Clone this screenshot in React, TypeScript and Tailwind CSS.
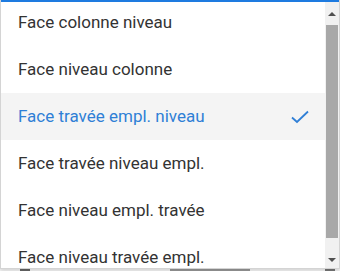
const options = [
  "Face colonne niveau",
  "Face niveau colonne",
  "Face travée empl. niveau",
  "Face travée niveau empl.",
  "Face niveau empl. travée",
  "Face niveau travée empl.",
];

const selected = 2;

export default function App() {
  return (
    <div className="relative w-[340px] h-[271px] overflow-hidden bg-[#f7f7f7] font-['Roboto',sans-serif]">
      {/* bits of the page behind the menu */}
      <div className="absolute left-0 top-[266px] w-full h-[5px] flex items-end">
        <div className="ml-[20px] w-[10px] h-[2px] bg-[#666]" />
        <div className="ml-[140px] w-[80px] h-[2px] bg-[#999]" />
        <div className="ml-[75px] w-[10px] h-[2px] bg-[#777]" />
      </div>

      <div className="relative flex w-[340px] h-[269px] bg-white border-l border-r border-b border-[#d4d4d4] shadow-[0_2px_4px_rgba(0,0,0,0.15)] overflow-hidden">
        <div className="absolute left-0 top-0 w-full h-[2px] bg-[#1e7be0] z-10" />
        <ul className="flex-1 flex flex-col -mt-[1px]">
          {options.map((opt, i) => (
            <li
              key={i}
              className={`flex items-center justify-between h-[47px] shrink-0 pl-[17px] pr-[16px] text-[17px] ${
                i === selected ? "bg-[#f4f4f4] text-[#2f7fd6]" : "text-[#333]"
              }`}
            >
              <span>{opt}</span>
              {i === selected && (
                <svg width="18" height="14" viewBox="0 0 18 14" fill="none" stroke="#2f7fd6" strokeWidth="1.8">
                  <path d="M1 7.5 L6 12 L17 1.5" />
                </svg>
              )}
            </li>
          ))}
        </ul>

        {/* scrollbar */}
        <div className="flex flex-col w-[14px] bg-[#f1f1f1] shrink-0">
          <div className="h-[25px] flex items-center justify-center pt-[2px]">
            <div className="w-0 h-0 border-l-[4px] border-r-[4px] border-b-[4px] border-l-transparent border-r-transparent border-b-[#505050]" />
          </div>
          <div className="mx-[1px] h-[213px] bg-[#a8a8a8]" />
          <div className="flex-1 flex items-center justify-center pt-[14px]">
            <div className="w-0 h-0 border-l-[4px] border-r-[4px] border-t-[4px] border-l-transparent border-r-transparent border-t-[#505050]" />
          </div>
        </div>
      </div>
    </div>
  );
}
